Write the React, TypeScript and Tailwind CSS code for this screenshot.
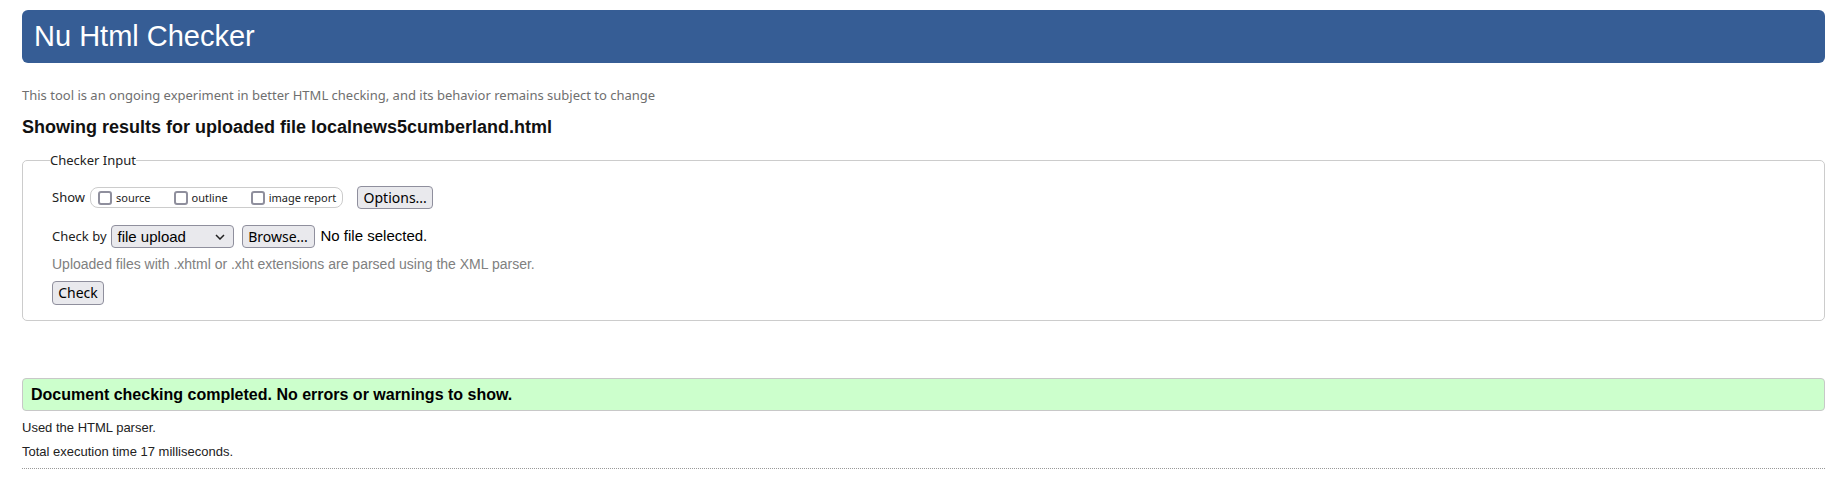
import React from "react";

const arial = "font-['Liberation_Sans',Arial,sans-serif]";
const ui = "font-['Noto_Sans',sans-serif]";

function Box({ label }: { label: string }) {
  return (
    <label className="flex items-center gap-[4px]">
      <input
        type="checkbox"
        className="h-[14px] w-[14px] appearance-none rounded-[3px] border-2 border-[#8f8f9d] bg-white"
      />
      <span className={`${ui} text-[11px] leading-none text-[#222]`}>{label}</span>
    </label>
  );
}

function Btn({ children, className = "" }: { children: React.ReactNode; className?: string }) {
  return (
    <button
      type="button"
      className={`${ui} flex items-center justify-center rounded-[4px] border border-[#8f8f9d] bg-[#e9e9ed] text-[14px] leading-none text-black ${className}`}
    >
      {children}
    </button>
  );
}

export default function App() {
  return (
    <div className={`${arial} min-h-screen bg-white pt-[10px] pr-[20px] pl-[22px] text-[#222]`}>
      <div className="flex h-[53px] items-center rounded-[6px] bg-[#365d95] pl-[12px]">
        <h1 className="text-[29px] leading-none text-white">Nu Html Checker</h1>
      </div>

      <p className={`${ui} mt-[24px] text-[13px] leading-4 text-[#6f6f6f]`}>
        This tool is an ongoing experiment in better HTML checking, and its behavior remains subject to change
      </p>

      <h2 className="mt-[14px] text-[18px] leading-5 font-bold text-[#111]">
        Showing results for uploaded file localnews5cumberland.html
      </h2>

      <fieldset className="mt-[15px] rounded-[5px] border border-[#ccc] pt-[18px] pr-4 pb-[15px] pl-[29px]">
        <legend className={`${ui} -ml-[2px] text-[13px] leading-4 text-[#222]`}>Checker Input</legend>

        <div className="flex h-[23px] items-center">
          <span className={`${ui} mr-[5px] text-[13px] text-[#222]`}>Show</span>
          <div className="flex h-[21px] items-center gap-[23px] rounded-[8px] border border-[#ccc] pr-[6px] pl-[7px]">
            <Box label="source" />
            <Box label="outline" />
            <Box label="image report" />
          </div>
          <Btn className="ml-[14px] h-[23px] w-[76px]">Options...</Btn>
        </div>

        <div className="mt-[16px] flex h-[23px] items-center">
          <span className={`${ui} mr-[4px] text-[13px] text-[#222]`}>Check by</span>
          <div className="flex h-[23px] w-[123px] items-center justify-between rounded-[4px] border border-[#8f8f9d] bg-[#e9e9ed] pr-[8px] pl-[6px]">
            <span className="text-[15px] leading-none text-black">file upload</span>
            <svg width="10" height="6" viewBox="0 0 10 6" fill="none">
              <path d="M1 1l4 4 4-4" stroke="#222" strokeWidth="1.5" />
            </svg>
          </div>
          <Btn className="ml-[8px] h-[23px] w-[73px]">Browse...</Btn>
          <span className="ml-[6px] text-[15px] text-black">No file selected.</span>
        </div>

        <p className="mt-[8px] text-[14px] leading-4 text-[#808080]">
          Uploaded files with .xhtml or .xht extensions are parsed using the XML parser.
        </p>

        <Btn className="mt-[9px] h-[24px] w-[52px]">Check</Btn>
      </fieldset>

      <div className="mt-[57px] flex h-[33px] items-center rounded-[4px] border border-[#c8c8c8] bg-[#ccffcc] pl-[8px]">
        <p className="text-[16px] font-bold text-black">Document checking completed. No errors or warnings to show.</p>
      </div>

      <p className="mt-[9px] text-[13px] leading-4 text-[#222]">Used the HTML parser.</p>
      <p className="mt-[8px] text-[13px] leading-4 text-[#222]">Total execution time 17 milliseconds.</p>
      <div className="mt-[8px] border-b border-dotted border-[#999]" />
    </div>
  );
}
